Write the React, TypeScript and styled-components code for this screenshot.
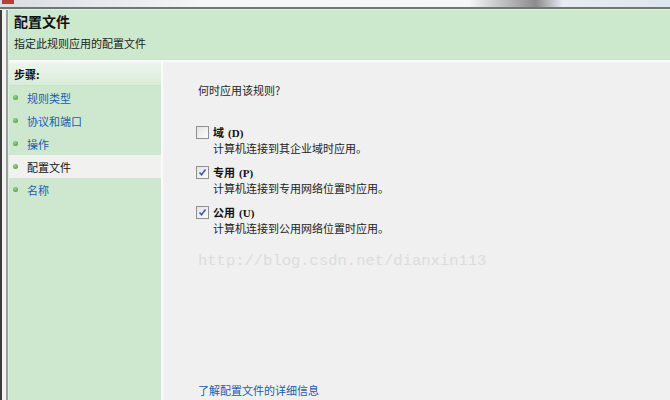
import styled, { createGlobalStyle } from 'styled-components';

const GlobalStyle = createGlobalStyle`
  html, body {
    margin: 0;
    padding: 0;
    background: #f0f0f0;
  }
  body {
    font-family: 'Noto Sans CJK SC', 'Noto Sans', sans-serif;
    font-size: 11px;
    color: #1e1e1e;
  }
`;

const steps = ['规则类型', '协议和端口', '操作', '配置文件', '名称'];
const activeStep = '配置文件';

const profiles = [
  { name: '域', key: 'D', checked: false, note: '计算机连接到其企业域时应用。' },
  { name: '专用', key: 'P', checked: true, note: '计算机连接到专用网络位置时应用。' },
  { name: '公用', key: 'U', checked: true, note: '计算机连接到公用网络位置时应用。' },
];

const Window = styled.div`
  width: 670px;
  height: 400px;
  overflow: hidden;
  display: flex;
  flex-direction: column;
  position: relative;
`;

const TitleBar = styled.div`
  height: 7px;
  display: flex;
  align-items: flex-start;
  background: linear-gradient(90deg, #d9dde3 0%, #f3f5f6 30%, #f4f6f7 70%, #8c8c8c 80%, #e6ecf3 84%, #dde5ee 100%);
  border-bottom: 2px solid #6d7773;
`;

const AppIcon = styled.span`
  width: 12px;
  height: 4px;
  background: #b5403a;
  margin-left: 2px;
`;

const Body = styled.div`
  flex: 1;
  display: flex;
  border-top: 1px solid #e3efe5;
  min-height: 0;
`;

const FrameEdge = styled.div`
  width: 9px;
  flex: none;
  background: linear-gradient(90deg, #3a3a3a 0, #3a3a3a 2px, #f2f2f2 2px, #f2f2f2 6px, #9aa09c 6px, #9aa09c 8px, #dcefdf 8px);
`;

const Content = styled.div`
  flex: 1;
  display: flex;
  flex-direction: column;
  min-width: 0;
`;

const Header = styled.header`
  height: 52px;
  flex: none;
  box-sizing: border-box;
  padding: 1px 0 0 5px;
  background: #cce8cd;
  border-bottom: 2px solid #fafdf9;
`;

const Title = styled.h1`
  margin: 0;
  font-size: 14px;
  font-weight: 700;
  line-height: 20px;
  color: #111;
`;

const Subtitle = styled.p`
  margin: 4px 0 0;
  font-size: 11px;
  line-height: 16px;
  color: #222;
`;

const Main = styled.div`
  flex: 1;
  display: flex;
  min-height: 0;
`;

const Sidebar = styled.nav`
  width: 152px;
  flex: none;
  background: #cde8cf;
  border-right: 2px solid #fbfbfb;
`;

const StepsHeading = styled.div`
  height: 23px;
  display: flex;
  align-items: center;
  padding-left: 5px;
  font-weight: 700;
  font-size: 11px;
  color: #111;
  background: linear-gradient(180deg, #eef5ee 0%, #d8ecd9 100%);
  border-bottom: 1px solid #c6e2c8;
`;

const StepList = styled.ul`
  list-style: none;
  margin: 0;
  padding: 0;
`;

const StepItem = styled.li<{ $active: boolean }>`
  height: 23px;
  display: flex;
  align-items: center;
  gap: 9px;
  padding-left: 4px;
  font-size: 11px;
  color: ${(p) => (p.$active ? '#111' : '#1a5bb5')};
  background: ${(p) => (p.$active ? '#f1f2f0' : 'transparent')};
`;

const Bullet = styled.span`
  width: 5px;
  height: 5px;
  border-radius: 50%;
  background: radial-gradient(circle at 40% 35%, #9ad58a, #3f8f33);
`;

const Pane = styled.section`
  flex: 1;
  position: relative;
  display: flex;
  flex-direction: column;
  padding: 20px 0 0 35px;
  background: #f0f0f0;
`;

const Question = styled.p`
  margin: 0 0 26px;
  font-size: 11px;
  line-height: 16px;
  color: #1e1e1e;
`;

const ProfileGroup = styled.div`
  display: flex;
  flex-direction: column;
  gap: 8px;
`;

const Profile = styled.div`
  display: flex;
  flex-direction: column;
`;

const ProfileRow = styled.label`
  display: flex;
  align-items: center;
  gap: 4px;
  height: 16px;
  margin-left: -2px;
`;

const Box = styled.span<{ $checked: boolean }>`
  width: 11px;
  height: 11px;
  border: 1px solid #8f8f8f;
  background: linear-gradient(135deg, #e4e4e4, #fbfbfb);
  display: flex;
  align-items: center;
  justify-content: center;
`;

const ProfileName = styled.span`
  font-weight: 700;
  font-size: 11px;
  color: #111;
`;

const Hotkey = styled.span`
  font-family: 'Liberation Serif', 'Noto Sans CJK SC', serif;
  font-weight: 700;
  font-size: 11px;
  margin-left: 4px;
`;

const ProfileNote = styled.div`
  padding-left: 15px;
  font-size: 11px;
  line-height: 16px;
  color: #222;
`;

const Watermark = styled.div`
  position: absolute;
  left: 35px;
  top: 190px;
  font-family: 'Liberation Mono', monospace;
  font-size: 15.5px;
  color: #dcdcdc;
  pointer-events: none;
`;

const MoreLink = styled.a`
  margin-top: auto;
  margin-bottom: 2px;
  font-size: 11px;
  line-height: 16px;
  color: #1a5bb5;
  text-decoration: none;
`;

function CheckMark() {
  return (
    <svg width="9" height="9" viewBox="0 0 9 9">
      <path d="M1.5 4.5 L3.5 6.8 L7.5 1.5" fill="none" stroke="#3c5ea8" strokeWidth="1.6" />
    </svg>
  );
}

export default function App() {
  return (
    <>
      <GlobalStyle />
      <Window>
        <TitleBar>
          <AppIcon />
        </TitleBar>
        <Body>
          <FrameEdge />
          <Content>
            <Header>
              <Title>配置文件</Title>
              <Subtitle>指定此规则应用的配置文件</Subtitle>
            </Header>
            <Main>
              <Sidebar>
                <StepsHeading>步骤:</StepsHeading>
                <StepList>
                  {steps.map((step) => (
                    <StepItem key={step} $active={step === activeStep}>
                      <Bullet />
                      {step}
                    </StepItem>
                  ))}
                </StepList>
              </Sidebar>
              <Pane>
                <Question>何时应用该规则?</Question>
                <ProfileGroup>
                  {profiles.map((profile) => (
                    <Profile key={profile.key}>
                      <ProfileRow>
                        <Box $checked={profile.checked}>{profile.checked && <CheckMark />}</Box>
                        <ProfileName>
                          {profile.name}
                          <Hotkey>({profile.key})</Hotkey>
                        </ProfileName>
                      </ProfileRow>
                      <ProfileNote>{profile.note}</ProfileNote>
                    </Profile>
                  ))}
                </ProfileGroup>
                <Watermark>http://blog.csdn.net/dianxin113</Watermark>
                <MoreLink href="#">了解配置文件的详细信息</MoreLink>
              </Pane>
            </Main>
          </Content>
        </Body>
      </Window>
    </>
  );
}
